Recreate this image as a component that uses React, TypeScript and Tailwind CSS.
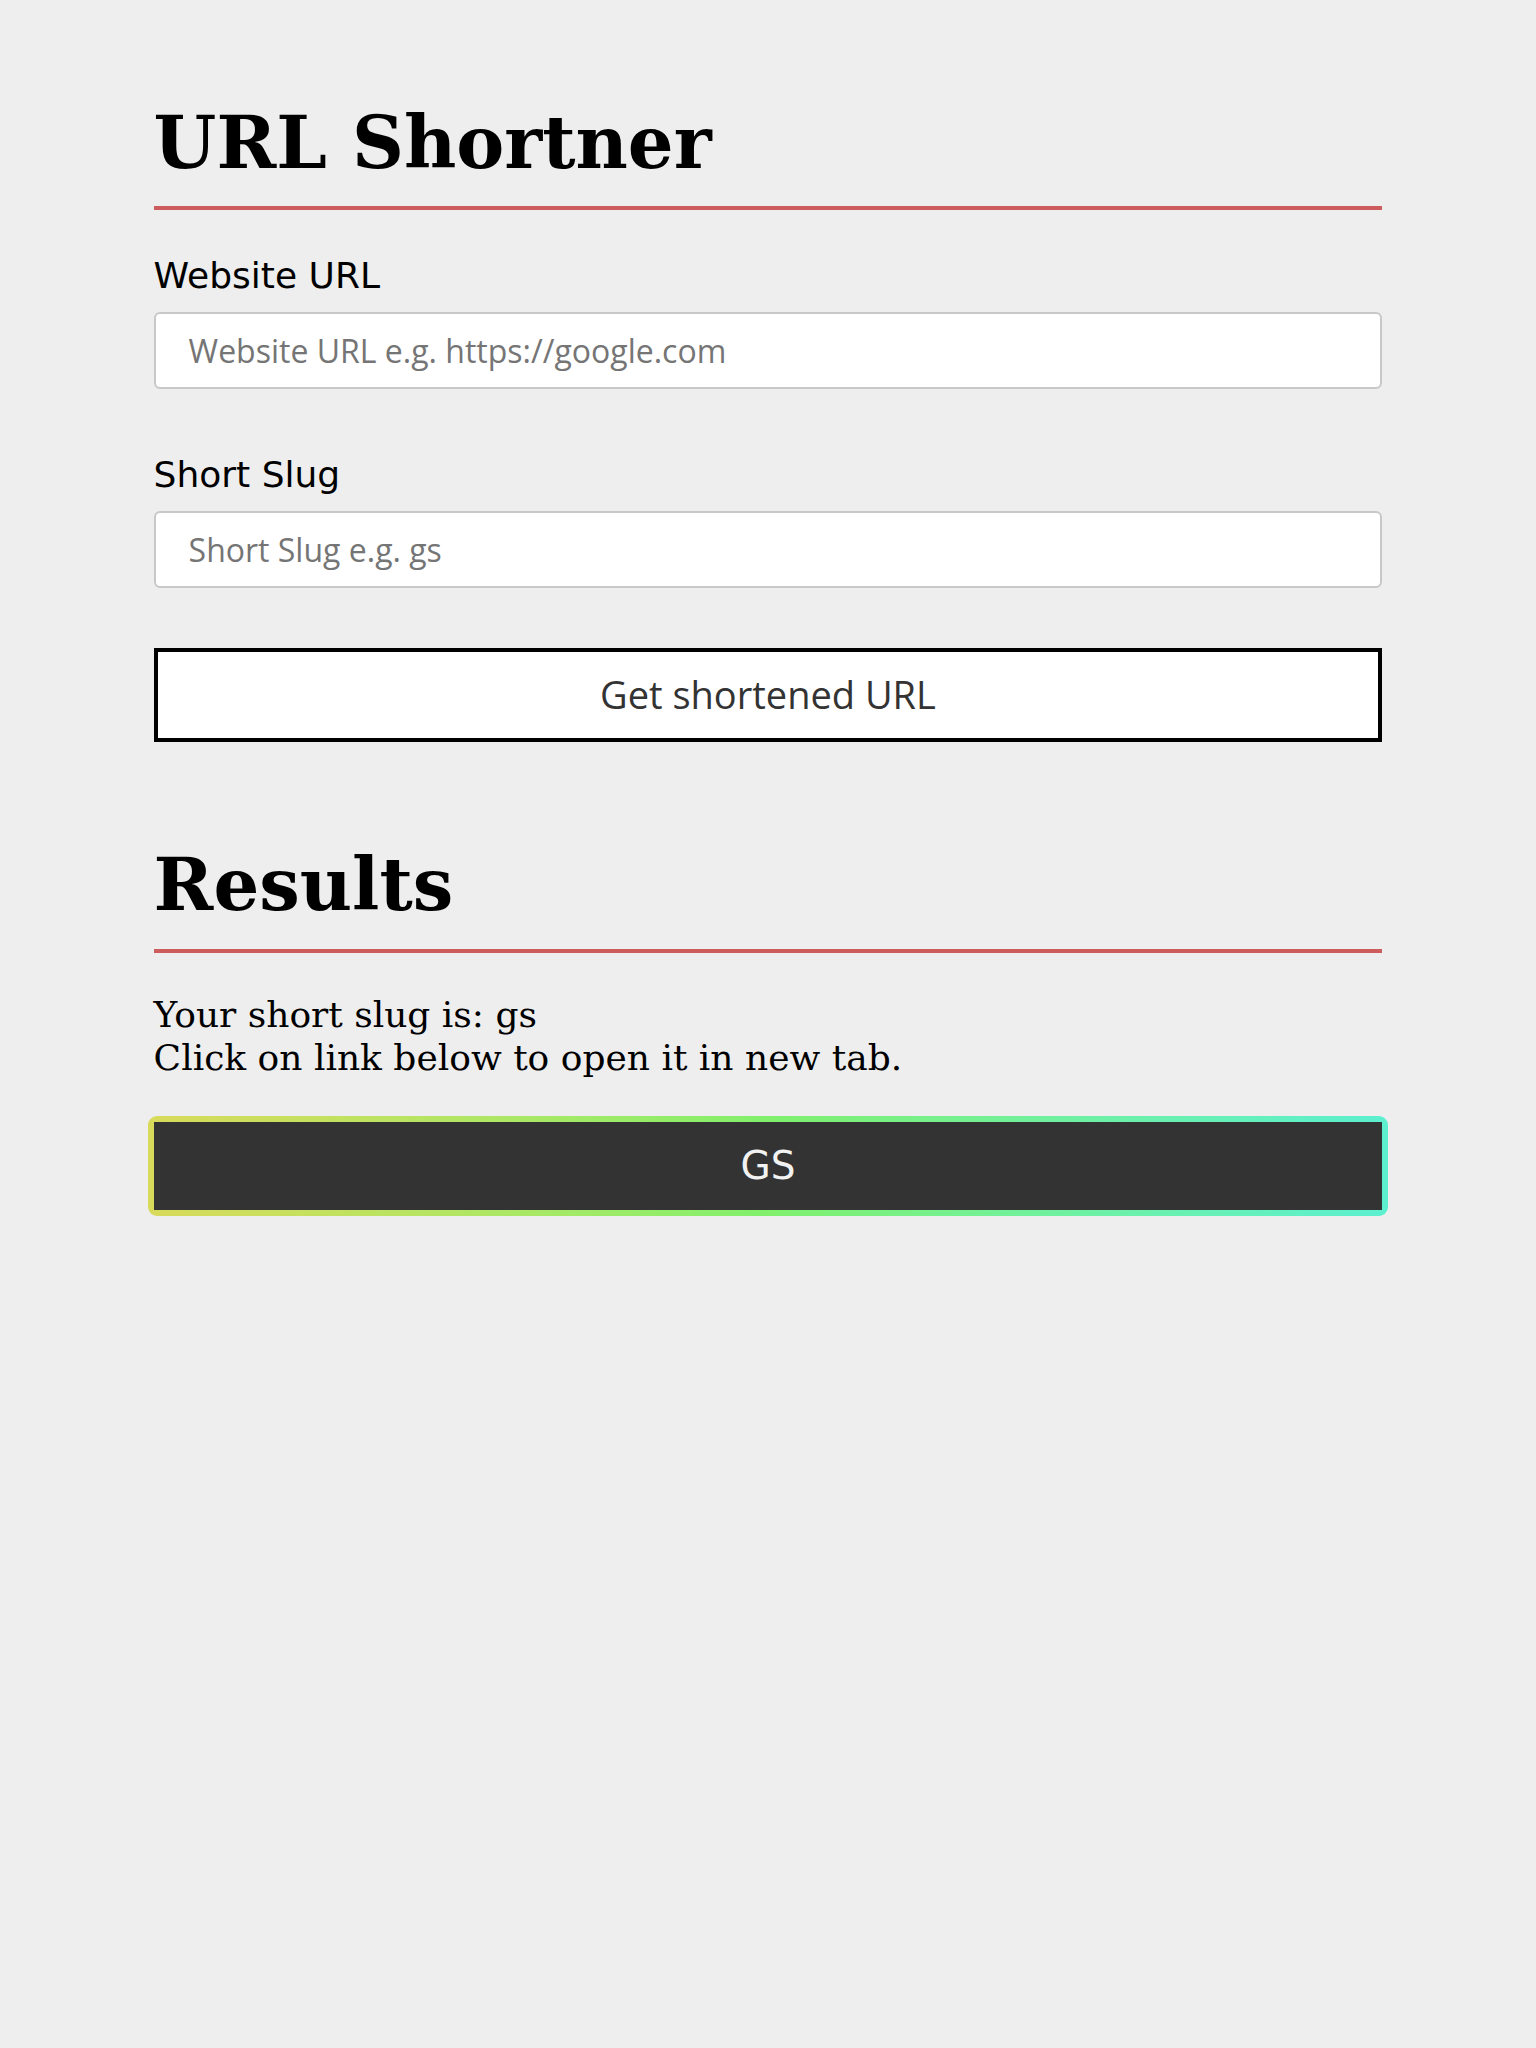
import { useState } from "react";

const serif = "[font-family:'DejaVu_Serif',serif]";

export default function App() {
  const [url, setUrl] = useState("");
  const [slug, setSlug] = useState("");

  return (
    <main className={`min-h-screen bg-[#eeeeee] pt-[101px] text-black ${serif}`}>
      <div className="w-4/5 mx-auto">
        <h1 className="text-[72px] font-bold leading-[1.164] pb-[21px] border-b-4 border-[#cd5c5c]">
          URL Shortner
        </h1>

        <form className="flex flex-col" onSubmit={(e) => e.preventDefault()}>
          <label className="mt-[45px] text-[36px] leading-[1.164] [font-family:'DejaVu_Sans',sans-serif]">
            Website URL
          </label>
          <input
            value={url}
            onChange={(e) => setUrl(e.target.value)}
            placeholder="Website URL e.g. https://google.com"
            className="mt-[15px] h-[77px] w-full rounded-[6px] border-2 border-[#c8c8c8] bg-white px-[33px] text-[32px] text-[#333] placeholder:text-[#757575] outline-none [font-family:'Open_Sans',sans-serif]"
          />

          <label className="mt-[65px] text-[36px] leading-[1.164] [font-family:'DejaVu_Sans',sans-serif]">
            Short Slug
          </label>
          <input
            value={slug}
            onChange={(e) => setSlug(e.target.value)}
            placeholder="Short Slug e.g. gs"
            className="mt-[15px] h-[77px] w-full rounded-[6px] border-2 border-[#c8c8c8] bg-white px-[33px] text-[32px] text-[#333] placeholder:text-[#757575] outline-none [font-family:'Open_Sans',sans-serif]"
          />

          <button
            type="submit"
            className="mt-[60px] h-[94px] w-full border-4 border-black bg-white text-[38px] text-[#333] [font-family:'Open_Sans',sans-serif]"
          >
            Get shortened URL
          </button>
        </form>

        <h2 className="mt-[101px] text-[72px] font-bold leading-[1.164] pb-[23px] border-b-4 border-[#cd5c5c]">
          Results
        </h2>

        <p className="mt-[41px] text-[36px] leading-[1.18]">
          Your short slug is: gs
          <br />
          Click on link below to open it in new tab.
        </p>

        <div className="mt-[37px] -mx-[6px] rounded-[9px] bg-linear-to-r from-[#d8da5a] via-[#80f06c] to-[#5cf0d0] p-[6px]">
          <a
            href="#"
            className="flex h-[88px] items-center justify-center bg-[#333333] text-[39px] text-[#f2f2f2] [font-family:'DejaVu_Sans',sans-serif]"
          >
            GS
          </a>
        </div>
      </div>
    </main>
  );
}
